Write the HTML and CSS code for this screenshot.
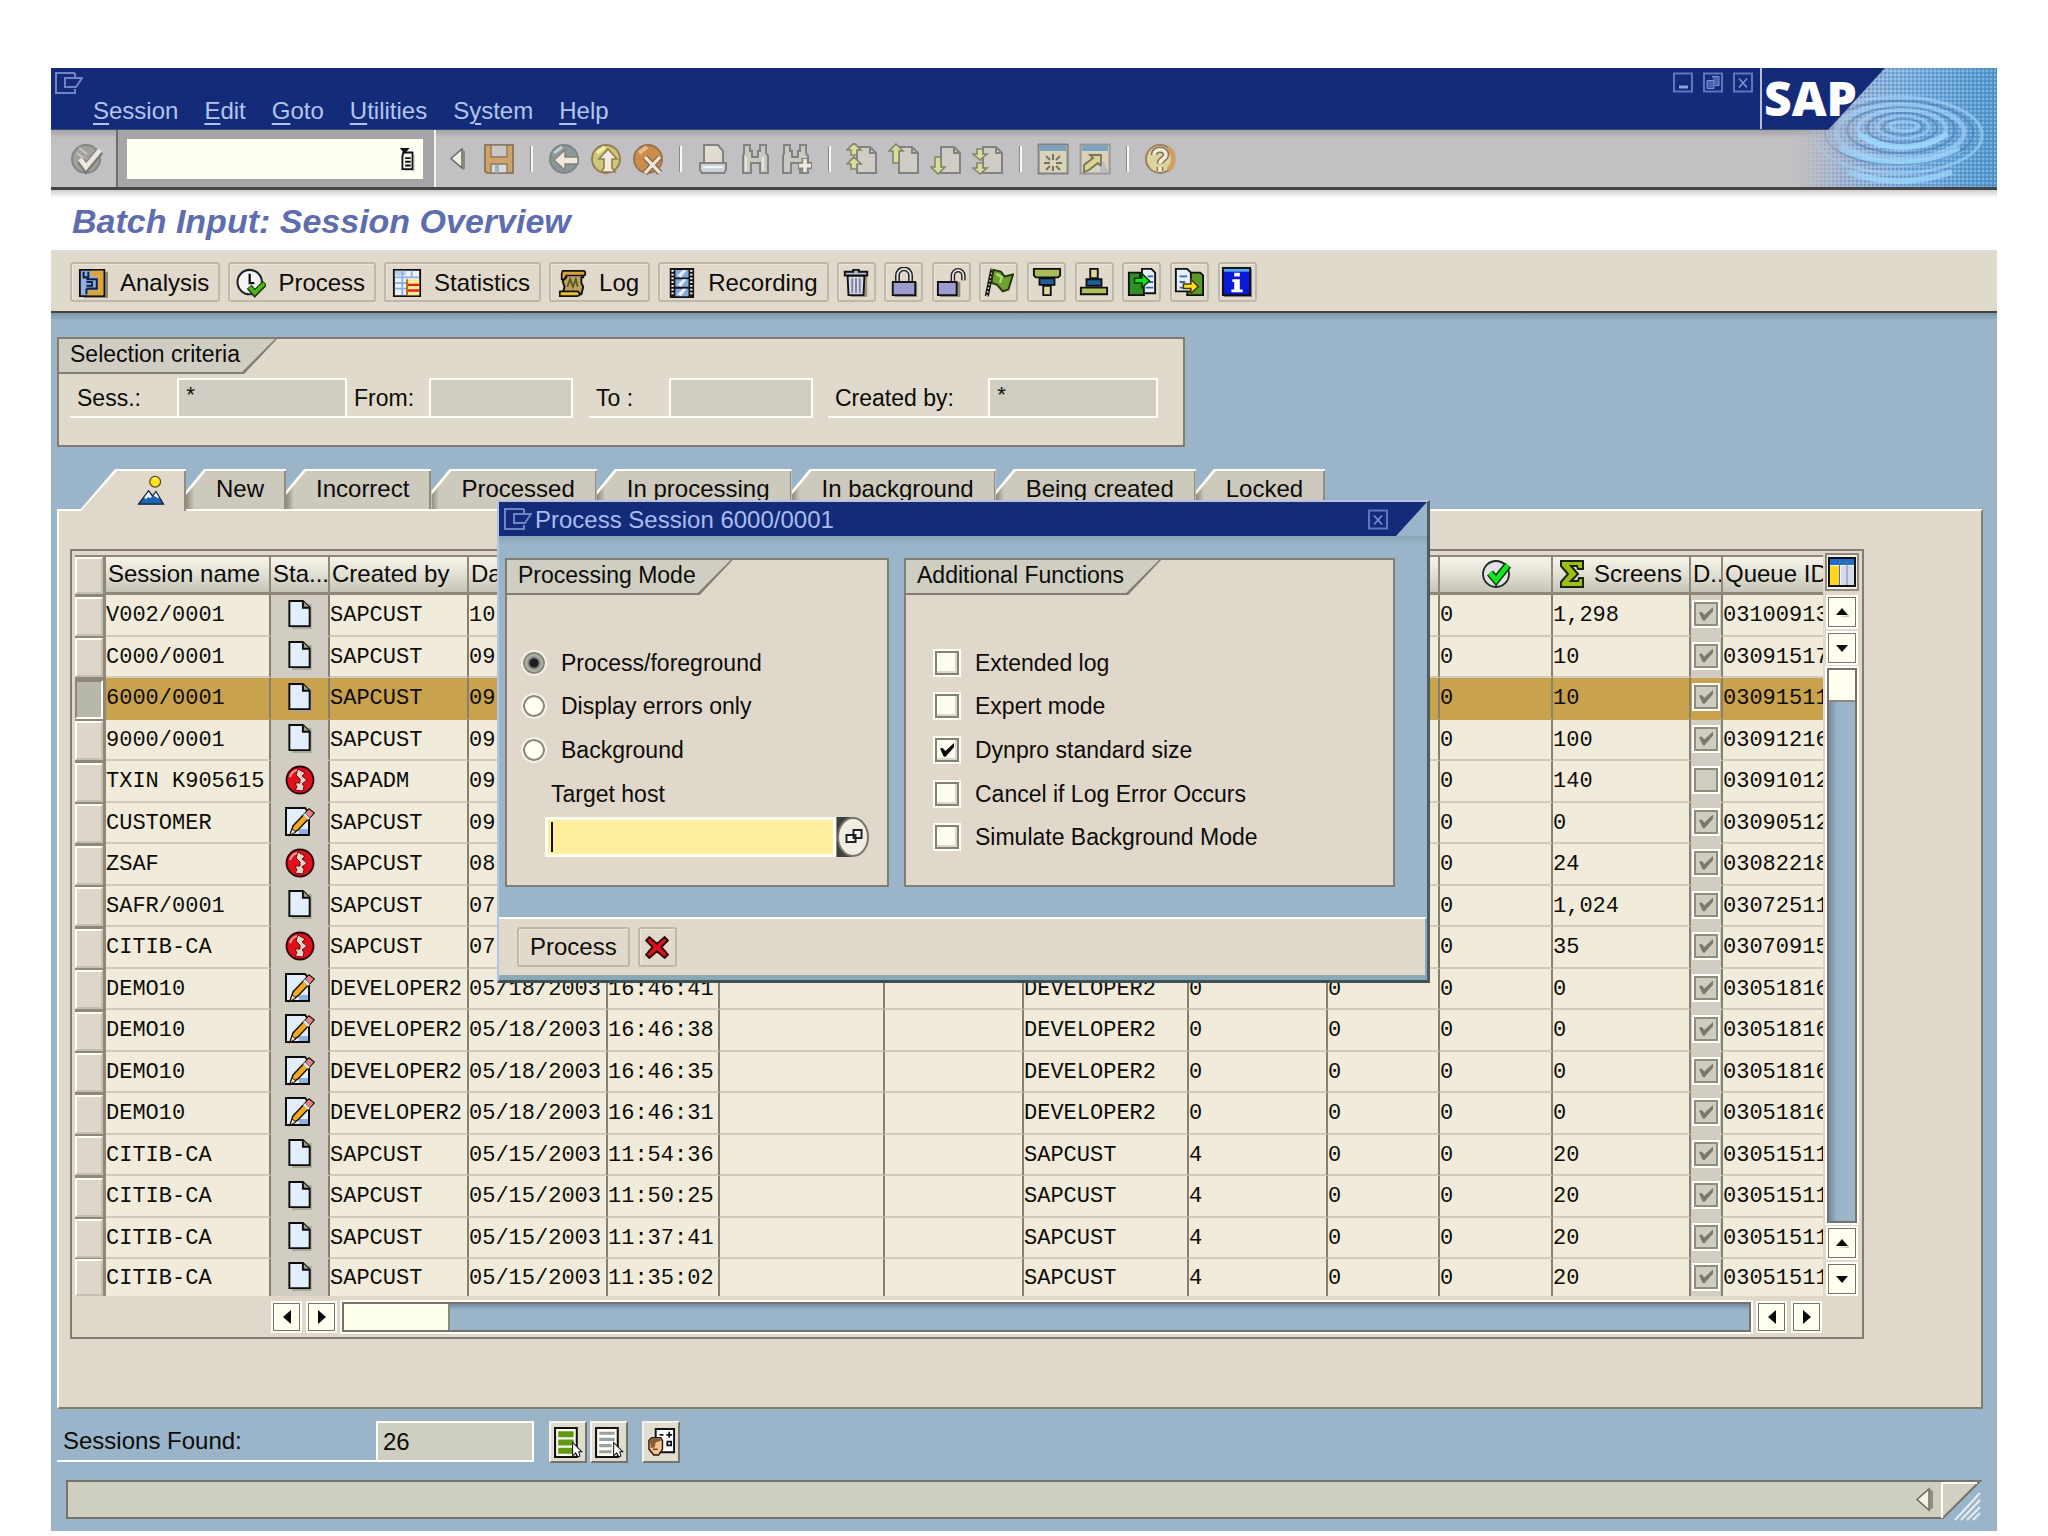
FILE: index.html
```html
<!DOCTYPE html>
<html lang="en">
<head>
<meta charset="utf-8">
<title>Batch Input: Session Overview</title>
<link rel="stylesheet" href="styles.css">
</head>
<body>
<svg class="sprite" aria-hidden="true">
  <symbol id="i-window" viewBox="0 0 28 22"><path d="M20 1H1v20h19v-4M10 6h17l-6 9H10zM20 1v5" fill="none" stroke="#7184c2" stroke-width="2"/></symbol>
  <symbol id="i-min" viewBox="0 0 20 20"><path d="M1 1h18v18H1z" fill="none" stroke="#5f76bd" stroke-width="2"/><path d="M6 13h9v3H6z" fill="#8fa4dc"/></symbol>
  <symbol id="i-restore" viewBox="0 0 20 20"><path d="M1 1h18v18H1z" fill="none" stroke="#5f76bd" stroke-width="2"/><path d="M4 8h7v8H4zM9 4h7v9h-4" fill="#4a62b0" stroke="#7f95d2"/></symbol>
  <symbol id="i-close" viewBox="0 0 20 20"><path d="M1 1h18v18H1z" fill="none" stroke="#5f76bd" stroke-width="2"/><path d="M6 6l8 9M14 6l-8 9" stroke="#7f95d2" stroke-width="1.5"/></symbol>
  <symbol id="i-enter" viewBox="0 0 16 16"><circle cx="7.5" cy="8" r="7" fill="#a3a19d" stroke="#868482"/><path d="M4 2.5l4 3M3 5l4 3" stroke="#c8c6c2"/><path d="M4.500 8.500l3 4L14.500 4" fill="none" stroke="#7d7b79" stroke-width="4"/><path d="M4.500 8l3 4 7-8.500" fill="none" stroke="#ece8de" stroke-width="2.300"/></symbol>
  <symbol id="i-list" viewBox="0 0 16 26"><path d="M4 6h10v18H3V10z" fill="#f5f5ee" stroke="#111" stroke-width="2"/><path d="M0 1h11L5.500 7z" fill="#111"/><path d="M6 12h6M6 16h6M6 20h6" stroke="#111" stroke-width="2"/><path d="M15.500 8v18H5" fill="none" stroke="#999"/></symbol>
  <symbol id="i-tri" viewBox="0 0 16 24"><path d="M14 3v20l2-1V4z" fill="#8b8984"/><path d="M13 2v19L2 11.500z" fill="#f1eee4" stroke="#6b6965" stroke-width="1.500"/></symbol>
  <symbol id="i-save" viewBox="0 0 16 16"><path d="M1 1h14v14H2l-1-1z" fill="#cfa468" stroke="#8e7a61"/><path d="M4 1h8v6H4z" fill="#c9c7c6" stroke="#8e7a61" stroke-width=".7"/><path d="M4 10.500h8V15H4z" fill="#d8dadb" stroke="#8e7a61" stroke-width=".7"/><path d="M6 11h2v4H6z" fill="#9fb3bd"/></symbol>
  <symbol id="i-back" viewBox="0 0 16 16"><circle cx="8" cy="8" r="7" fill="#8b9799" stroke="#7f8485"/><path d="M3 5l4-3" stroke="#c3cdd0" stroke-width="1.500"/><path d="M3 8.500L8.500 3.500V7H15v3.500H8.500v3z" fill="#eee7da" stroke="#857f76" stroke-width=".7"/></symbol>
  <symbol id="i-exit" viewBox="0 0 16 16"><circle cx="8" cy="8" r="7" fill="#cfc77e" stroke="#94804f"/><path d="M3.500 5l4-3" stroke="#f0eda9" stroke-width="2"/><path d="M9 3l4.500 5H11v4.500l1.500 2H5.500l1.500-2V8H4.500z" fill="#f1ebdb" stroke="#957c4b" stroke-width=".8"/></symbol>
  <symbol id="i-cancel" viewBox="0 0 16 16"><circle cx="8" cy="8" r="7" fill="#cb8d4a" stroke="#9a7550"/><path d="M3.500 5l4-3" stroke="#e9c08c" stroke-width="2"/><path d="M6.500 7l7.500 8M14 7l-7.500 8" stroke="#8d6c4e" stroke-width="3"/><path d="M6.500 7l7.500 8M14 7l-7.500 8" stroke="#f0e9da" stroke-width="1.600"/></symbol>
  <symbol id="i-print" viewBox="0 0 16 16"><path d="M3.500 1h7l2.500 3v7H3.500z" fill="#e2dcd0" stroke="#84827f"/><path d="M1.500 10h13v3.500l-1 1.500h-11l-1-1.500z" fill="#cbd3da" stroke="#84827f"/><path d="M3 12h10" stroke="#f3f3f3"/></symbol>
  <symbol id="i-find" viewBox="0 0 16 16"><path d="M2.500 1h3v3h1v3h3V4h1V1h3v4l1 1.500V15h-4v-5H6v5H2V6.500L2.500 5z" fill="#cac8c3" stroke="#84827f"/><path d="M3.500 7v7M12 7v7" stroke="#e9e6de"/></symbol>
  <symbol id="i-findnext" viewBox="0 0 16 16"><path d="M1.500 1h3v3h1v3h3V4h1V1h3v4l1 1.500V15h-4v-5H5v5H1V6.500L1.500 5z" fill="#cac8c3" stroke="#84827f"/><path d="M12 7.500v7.500M8.500 11.300h7" stroke="#84827f" stroke-width="3.600"/><path d="M12 8v6.500M9 11.300h6" stroke="#eee9dc" stroke-width="1.800"/></symbol>
  <symbol id="i-page" viewBox="0 0 16 16"><path d="M5.500 2H12l3 3v10H5.500z" fill="#cfcdc6" stroke="#84827f"/><path d="M12 2v3h3" fill="none" stroke="#84827f"/></symbol>
  <symbol id="i-up1" viewBox="0 0 16 16"><path d="M4 0l3.500 3.500H5.500V6h-3V3.500H.5zM4 7l3.500 3.500H5.500V13h-3v-2.500H.5z" fill="#d9dc9c" stroke="#82866a" stroke-width=".8"/></symbol>
  <symbol id="i-up" viewBox="0 0 16 16"><path d="M4 .5L7.500 4H5.500v6h-3V4H.5z" fill="#d9dc9c" stroke="#82866a" stroke-width=".8"/></symbol>
  <symbol id="i-down" viewBox="0 0 16 16"><path d="M4 15.500L.5 12h2V7h3v5h2z" fill="#d9dc9c" stroke="#82866a" stroke-width=".8"/></symbol>
  <symbol id="i-down2" viewBox="0 0 16 16"><path d="M4 8.500L.5 5.500h2V3h3v2.500h2zM4 15.500l-3.500-3h2V10h3v2.500h2z" fill="#d9dc9c" stroke="#82866a" stroke-width=".8"/></symbol>
  <symbol id="i-session" viewBox="0 0 16 16"><path d="M.8.800h14.500v14.500H.8z" fill="#d8d4bb" stroke="#84827f"/><path d="M1.500 1h13v3h-13z" fill="#7ea3be"/><path d="M8 5.500v3M8 11.500V14M3.500 10h3M9.500 10h3M4.500 6.500l2 2M11.500 6.500l-2 2M4.500 13.500l2-2M11.500 13.500l-2-2" stroke="#77745c"/></symbol>
  <symbol id="i-shortcut" viewBox="0 0 16 16"><path d="M.8.800h14.500v14.500H.8z" fill="#d8d4bb" stroke="#9a9894"/><path d="M1.500 1h13v3h-13z" fill="#7ea3be"/><path d="M2.500 14.500V11L7 7.500 5.500 6H11v5.500L9.500 10 5 13.500z" fill="#ddd391" stroke="#77745c" stroke-width=".9"/><path d="M12 9l3 6h-5z" fill="#bbb9c4"/></symbol>
  <symbol id="i-help" viewBox="0 0 16 16"><circle cx="8" cy="8" r="7" fill="#ded49e" stroke="#9a8363"/><path d="M12 2.500a7 7 0 0 1 0 11" fill="none" stroke="#d0a060" stroke-width="2.500"/><path d="M5 6c0-3.500 6-3.500 6 0 0 2-3 2-3 4.300M8 12v2" fill="none" stroke="#8a7558" stroke-width="3.300"/><path d="M5 6c0-3.500 6-3.500 6 0 0 2-3 2-3 4.300M8 12v2" fill="none" stroke="#f2ecde" stroke-width="1.800"/></symbol>
  <symbol id="i-analysis" viewBox="0 0 16 16"><path d="M2 2h14v14H3z" fill="#8b8676"/><path d="M1 1h13v14H1z" fill="#8fb0e0" stroke="#111"/><path d="M7 1.500h6.500v13H5v-2.500h5.500V4.500H7z" fill="#dfa437"/><path d="M3 2v3h2.500V2M4.500 6h5.500v5H4.500M4.500 11v3M4.500 7.500h3v2h-3" fill="none" stroke="#14204a" stroke-width="1.100"/></symbol>
  <symbol id="i-process" viewBox="0 0 16 16"><circle cx="7.300" cy="7.500" r="6.500" fill="#f4f6f8" stroke="#222" stroke-width="1.100"/><path d="M7.300 3V8h2.500" fill="none" stroke="#111" stroke-width="1.200"/><path d="M7 10l3 3.500L15.500 8" fill="none" stroke="#173f06" stroke-width="3.400"/><path d="M7.300 10.300l2.700 3L15 8.300" fill="none" stroke="#4fb51f" stroke-width="1.900"/></symbol>
  <symbol id="i-stats" viewBox="0 0 16 16"><path d="M1 1h14v14H1z" fill="#eef4fc" stroke="#111"/><path d="M1.500 1.500h6v2.500h-6z" fill="#b9d0f0"/><path d="M1.500 5h13M1.500 8h6M1.500 11h6M5.500 1.500v13M10.500 1.500v4" stroke="#8fb0e0"/><path d="M8 6h6.500v8.500H8z" fill="#ffe98c"/><path d="M8 9h6.500M8 12h6.500" stroke="#e2231a" stroke-width="1.300"/><path d="M8 6v8.500" stroke="#b36a10"/></symbol>
  <symbol id="i-log" viewBox="0 0 16 16"><path d="M4 3h10v2h-1v3l1 2-1 4H3l1-4-1-3 2-2z" fill="#c2a05c" stroke="#111"/><path d="M1.500 12.500h9c2 0 2 2.500 0 2.500h-9z" fill="#e8bd3c" stroke="#111" stroke-width=".9"/><path d="M3 1.500h11c1.500 0 1.500 2.500 0 2.500H5l-1 2H2.500V3z" fill="#d9a53a" stroke="#111" stroke-width=".9"/><path d="M5.500 10l1.500-4 1.500 4 1.500-4 1 4" fill="none" stroke="#4f5f2c"/></symbol>
  <symbol id="i-film" viewBox="0 0 16 16"><path d="M2 0h13v16H2z" fill="#151515"/><path d="M5 1h7v4H5zM5 6h7v4H5zM5 11h7v4H5z" fill="#86a8dc"/><path d="M6 4l3-3h2L8 5M6 9l3-3h2l-3 4M6 14l3-3h2l-3 4" fill="#e4efff"/><path d="M3.500 1v14M13.500 1v14" stroke="#fff" stroke-width="1.200" stroke-dasharray="1 1"/></symbol>
  <symbol id="i-trash" viewBox="0 0 16 16"><path d="M5 5h9v11H5z" fill="#99957f"/><path d="M3.500 4.500h9L12 15H4z" fill="#d8dbe6" stroke="#111"/><path d="M6 6v8M8 6v8M10 6v8" stroke="#7d80a0"/><path d="M2 2.500h4.500v-1h3v1H14v2H2z" fill="#b9bdcd" stroke="#111"/></symbol>
  <symbol id="i-lock" viewBox="0 0 16 16"><path d="M3 8h12v8H3z" fill="#8f8b7d"/><path d="M4.500 8V4.500a3.500 3.500 0 0 1 7 0V8" fill="none" stroke="#222" stroke-width="2.600"/><path d="M4.500 8V4.500a3.500 3.500 0 0 1 7 0V8" fill="none" stroke="#e8e8ee"/><path d="M2 8h12v7H2z" fill="#9d9cd0" stroke="#111"/></symbol>
  <symbol id="i-unlock" viewBox="0 0 16 16"><path d="M2 8h11v8H2z" fill="#8f8b7d"/><path d="M9 8V4.500a2.800 2.800 0 0 1 5.600 0V7" fill="none" stroke="#222" stroke-width="2.400"/><path d="M9 8V4.500a2.800 2.800 0 0 1 5.600 0V7" fill="none" stroke="#e8e8ee" stroke-width=".9"/><path d="M1 8h10v7H1z" fill="#9d9cd0" stroke="#111"/></symbol>
  <symbol id="i-flag" viewBox="0 0 16 16"><path d="M4.500 1L1.500 15.500" stroke="#111" stroke-width="2.200"/><path d="M4.500 1L1.500 15.500" stroke="#cfcbb8" stroke-width=".8" stroke-dasharray="1 1"/><path d="M5 1.500l4 1 2 2.500 4.500-1-2.500 8-3 1L7 9.500 4 8.500z" fill="#6ea02c" stroke="#21360b"/><path d="M6.500 3.500l3 2-1 3" fill="none" stroke="#b4d67c" stroke-width="1.200"/></symbol>
  <symbol id="i-funnel" viewBox="0 0 16 16"><path d="M1 1h14v3.500l-1 1H2l-1-1z" fill="#a9bb5c" stroke="#111"/><path d="M4 6h8v3.500H4z" fill="#1d5f9c" stroke="#111"/><path d="M6 10h4v5H6z" fill="#dcd79a" stroke="#111"/></symbol>
  <symbol id="i-funnelup" viewBox="0 0 16 16"><path d="M6 1h4v5H6z" fill="#dcd79a" stroke="#111"/><path d="M4 6.500h8V10H4z" fill="#1d5f9c" stroke="#111"/><path d="M1 11h14v3.500H1z" fill="#b3c05f" stroke="#111"/></symbol>
  <symbol id="i-import" viewBox="0 0 16 16"><path d="M8 1h5l2 2v11H8z" fill="#e6f0fc" stroke="#111"/><path d="M11 5h3M11 8h3M10 11h4" stroke="#3c62a8"/><path d="M1 3h6v3l2 4v5H1z" fill="#2f8f22" stroke="#111"/><path d="M4 6h4V3.500L12 7.500 8 11V8.500H4z" fill="#13e21b" stroke="#0a3a0a" stroke-width=".8"/></symbol>
  <symbol id="i-export" viewBox="0 0 16 16"><path d="M8 3h6l1.500 1.500V15H7z" fill="#5a9a2a" stroke="#111"/><path d="M1 1h6l2 2v10H1z" fill="#e6f0fc" stroke="#111"/><path d="M3 5h4M3 8h3M3 11h2" stroke="#3c62a8"/><path d="M5 9h4V6.500l4 4-4 3.500v-2.500H5z" fill="#ffe11e" stroke="#4b3c05" stroke-width=".8"/></symbol>
  <symbol id="i-info" viewBox="0 0 16 16"><path d="M1 1h15v15H1z" fill="#7d7a8a"/><path d="M.5.500h14.500V15H.5z" fill="#0a18d8" stroke="#101010"/><path d="M1 1h13.500v1.500H1z" fill="#57a8e8"/><path d="M6.500 3h3v2h-3zM5.500 6.500h4V12H11v1.500H5V12h1.500V8h-1z" fill="#fff"/></symbol>
  <symbol id="i-overview" viewBox="0 0 30 36"><circle cx="20" cy="8" r="6.500" fill="#ffe11c" stroke="#5a4a10" stroke-width="1.500"/><path d="M18 4h4" stroke="#fff7a8" stroke-width="2"/><path d="M0 35l12-16 5 6 4-5 9 15z" fill="#1c63b4" stroke="#10203a" stroke-width="1.500"/><path d="M7 27l5-7 4 6-2 2-2-2-3 3zM18 25l3-4 4 7-3-1z" fill="#fff"/></symbol>
  <symbol id="i-doc" viewBox="0 0 24 30"><path d="M4 4h20v26H4z" fill="#a9a598"/><path d="M1 1h14l7 7v19H1z" fill="#e3eefc" stroke="#0c0c0c" stroke-width="2"/><path d="M15 1v7h7" fill="#97a08f" stroke="#0c0c0c" stroke-width="2"/></symbol>
  <symbol id="i-error" viewBox="0 0 30 30"><circle cx="15" cy="15" r="13.500" fill="#e1101c" stroke="#2c0608" stroke-width="1.800"/><path d="M13 4l7 4-3 3 5 4-5 4 2 2-1 5-8-1 2-3-2-4 5 0 0-4-4-4z" fill="#ded6c6" stroke="#6e0a10"/><path d="M5 12q2-6 7-7" stroke="#ff9c9c" stroke-width="2" fill="none"/></symbol>
  <symbol id="i-edit" viewBox="0 0 30 30"><path d="M1 1h19l4 5v22H1z" fill="#e3eefc" stroke="#0c0c0c" stroke-width="2"/><path d="M14 22h9v5h-9z" fill="#8fb0e0"/><path d="M5 28l3-9L24 2l5 4L13 23z" fill="#f5a91c" stroke="#1c1408" stroke-width="1.500"/><path d="M20 6l5 5 4-5-5-4z" fill="#e77f86" stroke="#1c1408"/><path d="M18 8l5 5 2-2-5-5z" fill="#cfe0ee"/><path d="M5 28l2-6 4 3z" fill="#fff3c8" stroke="#1c1408"/></symbol>
  <symbol id="i-ok" viewBox="0 0 30 30"><circle cx="14" cy="15" r="13" fill="#dfe3e6" stroke="#222" stroke-width="1.800"/><path d="M8 14l6 7L26 6" fill="none" stroke="#063c06" stroke-width="8"/><path d="M8 14l6 7L26 6" fill="none" stroke="#16e420" stroke-width="5"/></symbol>
  <symbol id="i-sum" viewBox="0 0 26 28"><path d="M2 1h22v8h-5l-1-3h-6l7 8-7 7h7l1-3h4v9H2v-5l7-8-7-8z" fill="#9dc013" stroke="#1a2303" stroke-width="2"/></symbol>
  <symbol id="i-cols" viewBox="0 0 28 30"><path d="M1 1h26v28H1z" fill="#eef2fa" stroke="#111" stroke-width="2"/><path d="M2 2h24v6H2z" fill="#1f6fc4"/><path d="M2 9h9v19H2z" fill="#ffd91e"/><path d="M13 9h5v19h-5zM20 9h6v19h-6z" fill="#d5daea"/><path d="M11.500 4v24M19 4v24" stroke="#5a6c98"/></symbol>
  <symbol id="i-selall" viewBox="0 0 28 30"><path d="M1 1h21v28H1z" fill="#fffef4" stroke="#111" stroke-width="2"/><path d="M4 4h15v6H4zM4 12h15v6H4zM4 20h15v6H4z" fill="#5f9a12"/><path d="M18 15v13l3-3 2 4 2-1-1-4h3z" fill="#fff" stroke="#111"/></symbol>
  <symbol id="i-desel" viewBox="0 0 28 30"><path d="M1 1h21v28H1z" fill="#fffef4" stroke="#111" stroke-width="2"/><path d="M4 6h15M4 12h15M4 18h12M4 24h12" stroke="#9aa0a0" stroke-width="3"/><path d="M18 15v13l3-3 2 4 2-1-1-4h3z" fill="#fff" stroke="#111"/></symbol>
  <symbol id="i-person" viewBox="0 0 30 30"><path d="M9 1h19v24H9z" fill="#fff" stroke="#111" stroke-width="2"/><path d="M13 7h4M20 7h6M23 4v6M21 14h4v4h-4z" stroke="#111" stroke-width="1.800" fill="none"/><path d="M2 13l3-3h9l2 3v9l-4 6H7l-5-6z" fill="#f3c595" stroke="#2a1606" stroke-width="1.500"/><path d="M3 13l3-2h7l2 2-6 2-1 5-4 1z" fill="#8e5a30"/><path d="M6 22h5" stroke="#7a3a1c" stroke-width="1.500"/></symbol>
  <symbol id="i-x" viewBox="0 0 22 22"><path d="M4 2l7 6 7-6 3 3-6 6 6 7-3 3-7-6-7 6-3-3 6-7-6-6z" fill="#e2101c" stroke="#2c0608" stroke-width="1.800"/></symbol>
  <symbol id="i-f4" viewBox="0 0 32 40"><path d="M0 0h15v40H0z" fill="#3b413c"/><ellipse cx="16.500" cy="20" rx="15" ry="19" fill="#efede4" stroke="#77746a" stroke-width="2"/><path d="M17 13h8v8h-8zM10 18h9v7h-9z" fill="#fff" stroke="#222" stroke-width="2"/></symbol>
  <symbol id="i-au" viewBox="0 0 14 10"><path d="M4 10h10v-2z" fill="#c9c7ba"/><path d="M1 8L7 1l6 7z" fill="#0a0a0a"/></symbol>
  <symbol id="i-ad" viewBox="0 0 14 10"><path d="M1 2h12L7 9z" fill="#0a0a0a"/></symbol>
  <symbol id="i-al" viewBox="0 0 10 14"><path d="M9 0v14L1 7z" fill="#0a0a0a"/></symbol>
  <symbol id="i-ar" viewBox="0 0 10 14"><path d="M1 0v14l8-7z" fill="#0a0a0a"/></symbol>
</svg>

<div class="window">
  <header class="frame">
    <div class="caption">
      <div class="caption-row">
        <svg class="win-icon"><use href="#i-window"/></svg>
        <div class="win-buttons">
          <button aria-label="Minimize"><svg><use href="#i-min"/></svg></button>
          <button aria-label="Restore"><svg><use href="#i-restore"/></svg></button>
          <button aria-label="Close"><svg><use href="#i-close"/></svg></button>
        </div>
      </div>
      <nav class="menu">
        <button><u>S</u>ession</button>
        <button><u>E</u>dit</button>
        <button><u>G</u>oto</button>
        <button><u>U</u>tilities</button>
        <button>S<u>y</u>stem</button>
        <button><u>H</u>elp</button>
      </nav>
    </div>
    <div class="toolbar">
      <div class="enter"><button class="tb" aria-label="Enter"><svg><use href="#i-enter"/></svg></button></div>
      <div class="command">
        <input type="text" aria-label="Command">
        <button aria-label="Command history"><svg><use href="#i-list"/></svg></button>
      </div>
      <div class="tools">
        <button class="tb tri" aria-label="Hide command field"><svg><use href="#i-tri"/></svg></button>
        <button class="tb" aria-label="Save"><svg><use href="#i-save"/></svg></button>
        <span class="sep"></span>
        <button class="tb" aria-label="Back"><svg><use href="#i-back"/></svg></button>
        <button class="tb" aria-label="Exit"><svg><use href="#i-exit"/></svg></button>
        <button class="tb" aria-label="Cancel"><svg><use href="#i-cancel"/></svg></button>
        <span class="sep"></span>
        <button class="tb" aria-label="Print"><svg><use href="#i-print"/></svg></button>
        <button class="tb" aria-label="Find"><svg><use href="#i-find"/></svg></button>
        <button class="tb" aria-label="Find next"><svg><use href="#i-findnext"/></svg></button>
        <span class="sep"></span>
        <button class="tb" aria-label="First page"><svg><use href="#i-page"/><use href="#i-up1"/></svg></button>
        <button class="tb" aria-label="Previous page"><svg><use href="#i-page"/><use href="#i-up"/></svg></button>
        <button class="tb" aria-label="Next page"><svg><use href="#i-page"/><use href="#i-down"/></svg></button>
        <button class="tb" aria-label="Last page"><svg><use href="#i-page"/><use href="#i-down2"/></svg></button>
        <span class="sep"></span>
        <button class="tb" aria-label="New session"><svg><use href="#i-session"/></svg></button>
        <button class="tb" aria-label="Create shortcut"><svg><use href="#i-shortcut"/></svg></button>
        <span class="sep"></span>
        <button class="tb" aria-label="Help"><svg><use href="#i-help"/></svg></button>
      </div>
    </div>
    <svg class="brand" viewBox="0 0 237 119" role="img" aria-label="SAP">
      <defs>
        <linearGradient id="water" x1="0" x2="1"><stop offset="0" stop-color="#c0bfc2" stop-opacity="0"/><stop offset=".25" stop-color="#a6b3d0"/><stop offset=".55" stop-color="#7fb0e0"/><stop offset="1" stop-color="#5297cc"/></linearGradient>
        <linearGradient id="fade" x1="0" x2="1"><stop offset=".15" stop-color="#000"/><stop offset=".45" stop-color="#fff"/></linearGradient>
        <mask id="soft"><path d="M0 0h237v119H0z" fill="url(#fade)"/></mask>
        <pattern id="dots" width="4" height="4" patternUnits="userSpaceOnUse"><path d="M0 0h2v2H0z" fill="#3c80b8" opacity=".45"/><path d="M2 2h2v2H2z" fill="#c4e2f4" opacity=".35"/></pattern>
        <clipPath id="corner"><path d="M125 0h112v119H30V62h38z"/></clipPath>
      </defs>
      <g clip-path="url(#corner)">
        <path d="M30 0h207v119H30z" fill="url(#water)"/>
        <g mask="url(#soft)">
          <path d="M30 0h207v119H30z" fill="url(#dots)"/>
          <g fill="none" stroke="#a5d4fb" opacity=".6">
            <ellipse cx="144" cy="58" rx="14" ry="5" stroke-width="3"/>
            <ellipse cx="143" cy="59" rx="26" ry="11" stroke-width="2"/>
            <ellipse cx="142" cy="61" rx="44" ry="19" stroke-width="4"/>
            <ellipse cx="140" cy="64" rx="64" ry="27" stroke-width="5"/>
            <ellipse cx="138" cy="67" rx="84" ry="38" stroke-width="3"/>
          </g>
          <path d="M98 66q44 26 90 0M80 80q58 30 120 2M88 104q50 18 104 0" fill="none" stroke="#9fdcff" stroke-width="6" opacity=".7"/>
          <g fill="none" stroke="#4179ae" stroke-width="2" opacity=".5">
            <ellipse cx="143" cy="59" rx="20" ry="8"/>
            <ellipse cx="142" cy="60" rx="35" ry="15"/>
            <ellipse cx="141" cy="62" rx="54" ry="23"/>
            <ellipse cx="139" cy="65" rx="74" ry="32"/>
          </g>
        </g>
      </g>
      <path d="M1 0v61" stroke="#b9bfd0" stroke-width="2"/>
      <text class="logo" x="4" y="48">SAP</text>
    </svg>
  </header>

  <h1 class="title">Batch Input: Session Overview</h1>

  <div class="app-toolbar">
    <button class="btn"><svg><use href="#i-analysis"/></svg>Analysis</button>
    <button class="btn"><svg><use href="#i-process"/></svg>Process</button>
    <button class="btn"><svg><use href="#i-stats"/></svg>Statistics</button>
    <button class="btn"><svg><use href="#i-log"/></svg>Log</button>
    <button class="btn"><svg><use href="#i-film"/></svg>Recording</button>
    <div class="icon-buttons">
      <button class="btn icon" aria-label="Delete"><svg><use href="#i-trash"/></svg></button>
      <button class="btn icon" aria-label="Lock"><svg><use href="#i-lock"/></svg></button>
      <button class="btn icon" aria-label="Unlock"><svg><use href="#i-unlock"/></svg></button>
      <button class="btn icon" aria-label="Release"><svg><use href="#i-flag"/></svg></button>
      <button class="btn icon" aria-label="Sort descending"><svg><use href="#i-funnel"/></svg></button>
      <button class="btn icon" aria-label="Sort ascending"><svg><use href="#i-funnelup"/></svg></button>
      <button class="btn icon" aria-label="Import"><svg><use href="#i-import"/></svg></button>
      <button class="btn icon" aria-label="Export"><svg><use href="#i-export"/></svg></button>
      <button class="btn icon" aria-label="Information"><svg><use href="#i-info"/></svg></button>
    </div>
  </div>

  <main class="work">
    <section class="group criteria">
      <h2 class="group-title"><span>Selection criteria</span></h2>
      <div class="criteria-row">
        <label class="field f-sess"><span>Sess.:</span><input class="wide" type="text" value="*" readonly></label>
        <label class="field f-from"><span>From:</span><input type="text" readonly></label>
        <label class="field f-to"><span>To :</span><input type="text" readonly></label>
        <label class="field f-by"><span>Created by:</span><input class="wide" type="text" value="*" readonly></label>
      </div>
    </section>

    <div class="tabs" role="tablist">
      <button class="tab active" role="tab" aria-selected="true" aria-label="Overview"><svg><use href="#i-overview"/></svg></button>
      <button class="tab" role="tab">New</button>
      <button class="tab" role="tab">Incorrect</button>
      <button class="tab" role="tab">Processed</button>
      <button class="tab" role="tab">In processing</button>
      <button class="tab" role="tab">In background</button>
      <button class="tab" role="tab">Being created</button>
      <button class="tab" role="tab">Locked</button>
    </div>

    <section class="panel">
      <div class="grid-box">
        <table class="sessions">
          <colgroup><col class="c31"><col class="c165"><col class="c59"><col class="c139"><col class="c139"><col class="c112"><col class="c165"><col class="c139"><col class="c165"><col class="c139"><col class="c112"><col class="c113"><col class="c138"><col class="c32"><col class="c100"></colgroup>
          <thead>
            <tr><th class="sel"><button aria-label="Select all"></button></th><th>Session name</th><th>Sta...</th><th>Created by</th><th>Date</th><th></th><th></th><th></th><th></th><th></th><th></th><th class="mid"><svg class="s30"><use href="#i-ok"/></svg></th><th><span class="sum"><svg class="s26"><use href="#i-sum"/></svg>Screens</span></th><th>D..</th><th>Queue ID</th></tr>
          </thead>
          <tbody>
            <tr><td class="sel"><button aria-label="Select row"></button></td><td>V002/0001</td><td class="st"><svg class="doc"><use href="#i-doc"/></svg></td><td>SAPCUST</td><td>10</td><td></td><td></td><td></td><td></td><td></td><td></td><td>0</td><td>1,298</td><td class="st"><input type="checkbox" aria-label="Dynpro" checked disabled></td><td>03100913</td></tr>
            <tr><td class="sel"><button aria-label="Select row"></button></td><td>C000/0001</td><td class="st"><svg class="doc"><use href="#i-doc"/></svg></td><td>SAPCUST</td><td>09</td><td></td><td></td><td></td><td></td><td></td><td></td><td>0</td><td>10</td><td class="st"><input type="checkbox" aria-label="Dynpro" checked disabled></td><td>03091517</td></tr>
            <tr class="current"><td class="sel"><button aria-label="Select row"></button></td><td>6000/0001</td><td class="st"><svg class="doc"><use href="#i-doc"/></svg></td><td>SAPCUST</td><td>09</td><td></td><td></td><td></td><td></td><td></td><td></td><td>0</td><td>10</td><td class="st"><input type="checkbox" aria-label="Dynpro" checked disabled></td><td>03091511</td></tr>
            <tr><td class="sel"><button aria-label="Select row"></button></td><td>9000/0001</td><td class="st"><svg class="doc"><use href="#i-doc"/></svg></td><td>SAPCUST</td><td>09</td><td></td><td></td><td></td><td></td><td></td><td></td><td>0</td><td>100</td><td class="st"><input type="checkbox" aria-label="Dynpro" checked disabled></td><td>03091216</td></tr>
            <tr><td class="sel"><button aria-label="Select row"></button></td><td>TXIN K905615</td><td class="st"><svg class="s30"><use href="#i-error"/></svg></td><td>SAPADM</td><td>09</td><td></td><td></td><td></td><td></td><td></td><td></td><td>0</td><td>140</td><td class="st"><input type="checkbox" aria-label="Dynpro" disabled></td><td>03091012</td></tr>
            <tr><td class="sel"><button aria-label="Select row"></button></td><td>CUSTOMER</td><td class="st"><svg class="s30"><use href="#i-edit"/></svg></td><td>SAPCUST</td><td>09</td><td></td><td></td><td></td><td></td><td></td><td></td><td>0</td><td>0</td><td class="st"><input type="checkbox" aria-label="Dynpro" checked disabled></td><td>03090512</td></tr>
            <tr><td class="sel"><button aria-label="Select row"></button></td><td>ZSAF</td><td class="st"><svg class="s30"><use href="#i-error"/></svg></td><td>SAPCUST</td><td>08</td><td></td><td></td><td></td><td></td><td></td><td></td><td>0</td><td>24</td><td class="st"><input type="checkbox" aria-label="Dynpro" checked disabled></td><td>03082218</td></tr>
            <tr><td class="sel"><button aria-label="Select row"></button></td><td>SAFR/0001</td><td class="st"><svg class="doc"><use href="#i-doc"/></svg></td><td>SAPCUST</td><td>07</td><td></td><td></td><td></td><td></td><td></td><td></td><td>0</td><td>1,024</td><td class="st"><input type="checkbox" aria-label="Dynpro" checked disabled></td><td>03072511</td></tr>
            <tr><td class="sel"><button aria-label="Select row"></button></td><td>CITIB-CA</td><td class="st"><svg class="s30"><use href="#i-error"/></svg></td><td>SAPCUST</td><td>07</td><td></td><td></td><td></td><td></td><td></td><td></td><td>0</td><td>35</td><td class="st"><input type="checkbox" aria-label="Dynpro" checked disabled></td><td>03070915</td></tr>
            <tr><td class="sel"><button aria-label="Select row"></button></td><td>DEMO10</td><td class="st"><svg class="s30"><use href="#i-edit"/></svg></td><td>DEVELOPER2</td><td>05/18/2003</td><td>16:46:41</td><td></td><td></td><td>DEVELOPER2</td><td>0</td><td>0</td><td>0</td><td>0</td><td class="st"><input type="checkbox" aria-label="Dynpro" checked disabled></td><td>03051816</td></tr>
            <tr><td class="sel"><button aria-label="Select row"></button></td><td>DEMO10</td><td class="st"><svg class="s30"><use href="#i-edit"/></svg></td><td>DEVELOPER2</td><td>05/18/2003</td><td>16:46:38</td><td></td><td></td><td>DEVELOPER2</td><td>0</td><td>0</td><td>0</td><td>0</td><td class="st"><input type="checkbox" aria-label="Dynpro" checked disabled></td><td>03051816</td></tr>
            <tr><td class="sel"><button aria-label="Select row"></button></td><td>DEMO10</td><td class="st"><svg class="s30"><use href="#i-edit"/></svg></td><td>DEVELOPER2</td><td>05/18/2003</td><td>16:46:35</td><td></td><td></td><td>DEVELOPER2</td><td>0</td><td>0</td><td>0</td><td>0</td><td class="st"><input type="checkbox" aria-label="Dynpro" checked disabled></td><td>03051816</td></tr>
            <tr><td class="sel"><button aria-label="Select row"></button></td><td>DEMO10</td><td class="st"><svg class="s30"><use href="#i-edit"/></svg></td><td>DEVELOPER2</td><td>05/18/2003</td><td>16:46:31</td><td></td><td></td><td>DEVELOPER2</td><td>0</td><td>0</td><td>0</td><td>0</td><td class="st"><input type="checkbox" aria-label="Dynpro" checked disabled></td><td>03051816</td></tr>
            <tr><td class="sel"><button aria-label="Select row"></button></td><td>CITIB-CA</td><td class="st"><svg class="doc"><use href="#i-doc"/></svg></td><td>SAPCUST</td><td>05/15/2003</td><td>11:54:36</td><td></td><td></td><td>SAPCUST</td><td>4</td><td>0</td><td>0</td><td>20</td><td class="st"><input type="checkbox" aria-label="Dynpro" checked disabled></td><td>03051511</td></tr>
            <tr><td class="sel"><button aria-label="Select row"></button></td><td>CITIB-CA</td><td class="st"><svg class="doc"><use href="#i-doc"/></svg></td><td>SAPCUST</td><td>05/15/2003</td><td>11:50:25</td><td></td><td></td><td>SAPCUST</td><td>4</td><td>0</td><td>0</td><td>20</td><td class="st"><input type="checkbox" aria-label="Dynpro" checked disabled></td><td>03051511</td></tr>
            <tr><td class="sel"><button aria-label="Select row"></button></td><td>CITIB-CA</td><td class="st"><svg class="doc"><use href="#i-doc"/></svg></td><td>SAPCUST</td><td>05/15/2003</td><td>11:37:41</td><td></td><td></td><td>SAPCUST</td><td>4</td><td>0</td><td>0</td><td>20</td><td class="st"><input type="checkbox" aria-label="Dynpro" checked disabled></td><td>03051511</td></tr>
            <tr><td class="sel"><button aria-label="Select row"></button></td><td>CITIB-CA</td><td class="st"><svg class="doc"><use href="#i-doc"/></svg></td><td>SAPCUST</td><td>05/15/2003</td><td>11:35:02</td><td></td><td></td><td>SAPCUST</td><td>4</td><td>0</td><td>0</td><td>20</td><td class="st"><input type="checkbox" aria-label="Dynpro" checked disabled></td><td>03051511</td></tr>
          </tbody>
        </table>
        <div class="vscroll">
          <button class="config" aria-label="Table settings"><svg><use href="#i-cols"/></svg></button>
          <button class="arrow" aria-label="First row"><svg class="v"><use href="#i-au"/></svg></button>
          <button class="arrow" aria-label="Next row"><svg class="v"><use href="#i-ad"/></svg></button>
          <div class="track"><div class="thumb"></div></div>
          <button class="arrow" aria-label="Previous row"><svg class="v"><use href="#i-au"/></svg></button>
          <button class="arrow" aria-label="Last row"><svg class="v"><use href="#i-ad"/></svg></button>
        </div>
        <div class="hscroll">
          <button class="arrow" aria-label="First column"><svg class="h"><use href="#i-al"/></svg></button>
          <button class="arrow" aria-label="Next column"><svg class="h"><use href="#i-ar"/></svg></button>
          <div class="track"><div class="thumb"></div></div>
          <button class="arrow" aria-label="Previous column"><svg class="h"><use href="#i-al"/></svg></button>
          <button class="arrow" aria-label="Last column"><svg class="h"><use href="#i-ar"/></svg></button>
        </div>
      </div>
    </section>

    <div class="found">
      <label class="field"><span>Sessions Found:</span><input type="text" value="26" readonly></label>
      <div class="found-buttons">
        <button class="raised" aria-label="Select all"><svg><use href="#i-selall"/></svg></button>
        <button class="raised" aria-label="Deselect all"><svg><use href="#i-desel"/></svg></button>
        <button class="raised apart" aria-label="User settings"><svg><use href="#i-person"/></svg></button>
      </div>
    </div>

    <footer class="status">
      <div class="message"></div>
      <svg class="status-end" viewBox="0 0 74 41" aria-hidden="true">
        <path d="M0 0h72L35 39H0z" fill="#cfcfc1"/>
        <path d="M34 2h36L36 38h-2z" fill="#d3cfc2"/>
        <path d="M0 1h72L35 38H0" fill="none" stroke="#747468" stroke-width="2"/>
        <path d="M34 38V3h35" fill="none" stroke="#fffef4" stroke-width="2"/>
        <path d="M22 9v21l3-2V11z" fill="#8f8d80"/>
        <path d="M21 9v21L9 19.500z" fill="#f4f2e8" stroke="#6d6b60" stroke-width="1.500"/>
        <path d="M47 40l25-27M53 40l19-20M59 40l13-13M65 40l7-7" stroke="#e6eef4" stroke-width="2"/>
      </svg>
    </footer>
  </main>

  <section class="dialog" role="dialog" aria-labelledby="dlg-title">
    <header class="dlg-head">
      <svg class="win-icon"><use href="#i-window"/></svg>
      <h2 id="dlg-title">Process Session 6000/0001</h2>
      <button aria-label="Close dialog"><svg><use href="#i-close"/></svg></button>
    </header>
    <div class="dlg-body">
      <section class="group mode">
        <h3 class="group-title"><span>Processing Mode</span></h3>
        <div class="options">
          <label class="opt"><input type="radio" name="mode" checked>Process/foreground</label>
          <label class="opt"><input type="radio" name="mode">Display errors only</label>
          <label class="opt"><input type="radio" name="mode">Background</label>
          <label class="host-label" for="host">Target host</label>
          <div class="host"><span class="caret"></span><input id="host" type="text"><button aria-label="Value help"><svg><use href="#i-f4"/></svg></button></div>
        </div>
      </section>
      <section class="group extra">
        <h3 class="group-title"><span>Additional Functions</span></h3>
        <div class="options">
          <label class="opt"><input type="checkbox">Extended log</label>
          <label class="opt"><input type="checkbox">Expert mode</label>
          <label class="opt"><input type="checkbox" checked>Dynpro standard size</label>
          <label class="opt"><input type="checkbox">Cancel if Log Error Occurs</label>
          <label class="opt"><input type="checkbox">Simulate Background Mode</label>
        </div>
      </section>
    </div>
    <footer class="dlg-foot">
      <button class="btn">Process</button>
      <button class="btn icon" aria-label="Cancel"><svg class="x"><use href="#i-x"/></svg></button>
    </footer>
  </section>
</div>
</body>
</html>
```

FILE: styles.css
```css
:root {
  --navy: #142b7a;
  --blue: #9ab5ca;
  --beige: #dfdacb;
  --line: #827d70;
  --grey: #d1cdc2;
  --cell: #f0ebda;
  --white: #fffef6;
}

* { box-sizing: border-box; }

body {
  margin: 0;
  background: #fff;
  color: #0c0b08;
  font-family: "Liberation Sans", Arial, sans-serif;
  font-size: 24px;
  line-height: 28px;
}

button, input {
  margin: 0;
  padding: 0;
  border: 0;
  border-radius: 0;
  background: none;
  color: inherit;
  font: inherit;
}

button { display: flex; align-items: center; justify-content: center; }
h1, h2, h3 { margin: 0; font-size: 24px; font-weight: 400; }
svg { display: block; flex: none; }
.sprite { position: absolute; width: 0; height: 0; }

.window {
  position: relative;
  margin: 68px 51px 0;
  background: var(--blue);
}

/* Title and menu bar */
.frame { position: relative; }
.caption { height: 62px; background: var(--navy); border-bottom: 1px solid #3d4a75; }
.caption-row { display: flex; justify-content: space-between; align-items: center; height: 29px; padding: 0 244px 0 4px; }
.win-icon { width: 28px; height: 22px; }
.win-buttons { display: flex; gap: 10px; }
.win-buttons svg, .dlg-head button svg { width: 20px; height: 21px; }
.menu { display: flex; gap: 26px; padding-left: 42px; color: #b3c5ef; }
.menu u { text-underline-offset: 4px; text-decoration-thickness: 2px; }

.toolbar {
  display: flex;
  height: 60px;
  background: linear-gradient(#a3a2a5, #c1c0c2 8px);
  border-bottom: 3px solid #454344;
}
.tb { width: 32px; height: 32px; }
.tb svg { width: 32px; height: 32px; }
.tb.tri svg { width: 16px; height: 24px; }
.enter { display: flex; align-items: center; width: 67px; padding-left: 20px; border-right: 2px solid #6e6c6e; }
.command { display: flex; width: 318px; padding: 9px 11px 8px 9px; background: #a6a5a7; border-right: 2px solid #f2f1f1; }
.command input { flex: 1; min-width: 0; background: #fffff2; }
.command button { width: 32px; background: #fffff2; }
.command svg { width: 16px; height: 24px; }
.tools { display: flex; align-items: center; gap: 10px; padding-left: 5px; }
.sep { width: 3px; height: 26px; margin: 0 5px; border-left: 1px solid #8b898b; background: #f8f8f8; }
.brand { position: absolute; top: 0; right: 0; width: 237px; height: 119px; }
.logo { fill: #fff; font: 800 48px "Open Sans", sans-serif; }

.title {
  height: 62px;
  padding: 10px 21px 0;
  background: linear-gradient(#cfcccc, #fff 8px);
  border-bottom: 2px solid #dddcd8;
  color: #5d6dae;
  font: italic 700 34px/42px "Liberation Sans", Arial, sans-serif;
}

/* Application toolbar */
.app-toolbar {
  display: flex;
  align-items: center;
  gap: 8px;
  height: 61px;
  padding: 0 19px;
  background: var(--beige);
  border-bottom: 2px solid #44453f;
}
.btn {
  height: 40px;
  padding: 2px 9px 0 6px;
  border: 2px solid #bdb8a7;
  border-radius: 3px;
  background: #e1dacc;
  box-shadow: inset 1px 1px #ebe6da;
}
.btn svg { width: 30px; height: 30px; margin-right: 12px; }
.btn.icon { width: 39px; padding: 0; }
.btn.icon svg { margin: 0; }
.icon-buttons { display: flex; justify-content: space-between; width: 420px; }

/* Work area */
.work { padding: 24px 14px 12px 6px; background: linear-gradient(#7f98a6, var(--blue) 8px); }
.group { border: 2px solid var(--line); background: var(--beige); font-size: 23px; }
.group-title {
  position: relative;
  isolation: isolate;
  width: fit-content;
  height: 35px;
  padding: 1px 37px 0 11px;
  background: var(--line);
  font-size: 23px;
  clip-path: polygon(0 0, 100% 0, calc(100% - 33px) 100%, 0 100%);
}
.group-title::before {
  content: "";
  position: absolute;
  inset: 0 2px 2px 0;
  z-index: -1;
  background: #d0cec2;
  clip-path: polygon(0 0, 100% 0, calc(100% - 33px) 100%, 0 100%);
}
.criteria { width: 1128px; height: 110px; }
.criteria-row { display: flex; padding: 4px 0 0 11px; }
.field { display: flex; height: 40px; }
.field span { padding: 6px 7px 0; border-bottom: 2px solid var(--white); white-space: nowrap; }
.field input { width: 144px; padding: 0 5px; border: 2px solid var(--white); background: var(--grey); font-family: "Liberation Mono", monospace; font-size: 22px; }
.field input.wide { width: 170px; }
.f-sess span { width: 107px; }
.f-from span { width: 82px; }
.f-to { margin-left: 16px; }
.f-to span { width: 80px; }
.f-by { margin-left: 15px; }
.f-by span { width: 160px; }

/* Tab strip */
.tabs { display: flex; height: 42px; margin: 22px 0 -2px 22px; }
.tab {
  position: relative;
  isolation: isolate;
  height: 40px;
  padding: 0 22px 0 30px;
  background: var(--white);
  white-space: nowrap;
  clip-path: polygon(0 22px, 18px 0, 100% 0, 100% 100%, 0 100%);
}
.tab::before {
  content: "";
  position: absolute;
  inset: 2px 0 0 0;
  z-index: -1;
  border-right: 2px solid #918c7e;
  background: linear-gradient(90deg, #8c8879, #cdc9bd 8px);
  clip-path: polygon(0 24px, 20px 0, 100% 0, 100% 100%, 0 100%);
}
.tab.active {
  z-index: 1;
  width: 107px;
  height: 42px;
  padding: 0 0 0 37px;
  clip-path: polygon(0 100%, 36px 0, 100% 0, 100% 100%);
}
.tab.active::before { background: #e0d9cb; clip-path: polygon(2px 100%, 38px 0, 100% 0, 100% 100%); }
.tab svg { width: 30px; height: 30px; }

.panel {
  padding: 38px 0 68px 11px;
  border: 2px solid var(--line);
  border-top-color: var(--white);
  border-left-color: var(--white);
  background: #e0d9cb;
}
.grid-box {
  display: grid;
  grid-template-columns: auto 34px;
  column-gap: 2px;
  width: fit-content;
  padding: 4px 3px 5px 3px;
  border: 2px solid var(--line);
}

/* Session table */
.sessions { width: 1748px; table-layout: fixed; border-spacing: 0; font-family: "Liberation Mono", monospace; font-size: 22px; }
.c31 { width: 31px; }
.c32 { width: 32px; }
.c59 { width: 59px; }
.c100 { width: 100px; }
.c112 { width: 112px; }
.c113 { width: 113px; }
.c138 { width: 138px; }
.c139 { width: 139px; }
.c165 { width: 165px; }
.sessions th {
  height: 40px;
  padding: 0 0 2px 2px;
  overflow: hidden;
  border-top: 2px solid #8d887a;
  border-right: 2px solid #8d887a;
  border-bottom: 3px solid #8d887a;
  background: linear-gradient(#f7f4e9, #e4e1d6 45%, #c6c3b9);
  font: 400 24px/28px "Liberation Sans", Arial, sans-serif;
  text-align: left;
  white-space: nowrap;
}
.sessions td {
  height: 42px;
  padding: 2px 0 0;
  overflow: hidden;
  border-right: 2px solid #85806f;
  border-bottom: 2px solid #cfcaba;
  background: var(--cell);
  line-height: 28px;
  white-space: nowrap;
}
.sessions tr:nth-child(even) td { height: 41px; }
.sessions tr:last-child td { height: 37px; border-bottom: 0; }
.sessions th:last-child, .sessions td:last-child { border-right: 0; }
.sessions .st { padding: 0 0 2px; border-bottom-color: var(--grey); background: var(--grey); }
.sessions .current td { border-bottom-color: #c9a24d; background: #c9a24d; }
.sessions .sel, .sessions .current .sel { border: 0; background: #8d887a; padding: 0; }
.sel button {
  width: 28px;
  height: 39px;
  border: 2px solid var(--white);
  border-right-color: #c3beb0;
  border-bottom-color: #c3beb0;
  background: #dcd7ca;
}
.sessions tr:last-child .sel button { height: 37px; }
.sessions th.sel button { height: 37px; }
.sessions .current .sel button { background: #b7b7aa; border-color: #8d887a var(--white) var(--white) #8d887a; }
.sessions svg { margin: 0 auto; }
.doc { width: 24px; height: 29px; }
.s30 { width: 30px; height: 30px; }
.sum { display: flex; align-items: center; gap: 9px; padding-left: 4px; }
.sum svg { width: 26px; height: 28px; margin: 0; }

input[type="checkbox"] {
  display: block;
  flex: none;
  appearance: none;
  width: 28px;
  height: 28px;
  border: 2px solid var(--white);
  background: #fdfcf0;
  box-shadow: inset 0 0 0 2px #848074, inset -4px -4px #dcd9cc;
}
input[type="checkbox"]:checked::before {
  content: "";
  display: block;
  width: 14px;
  height: 14px;
  margin: 5px;
  background: #0a0a0a;
  clip-path: polygon(0 40%, 20% 35%, 38% 58%, 100% 0, 100% 30%, 38% 100%, 25% 95%);
}
.sessions input[type="checkbox"] { margin: 0 auto; background: #cfccc0; box-shadow: inset 0 0 0 2px #8f8c80; }
.sessions input[type="checkbox"]:checked::before { background: #7b786c; }

/* Scroll bars */
.vscroll { display: flex; flex-direction: column; align-items: center; gap: 4px; padding-bottom: 1px; }
.config { width: 34px; height: 38px; margin: -2px 0 1px; border: 2px solid #8d887a; background: #f3f0e6; }
.config svg { width: 28px; height: 30px; }
.arrow { width: 32px; height: 32px; border: 2px solid #77736a; outline: 2px solid #fffefa; outline-offset: -1px; background: #fffff0; }
.vscroll .arrow { width: 30px; }
.v { width: 14px; height: 10px; }
.h { width: 10px; height: 14px; }
.track { flex: 1; border: 2px solid #77736a; outline: 2px solid #fffefa; background: linear-gradient(90deg, #6f8d9f, var(--blue) 8px); }
.vscroll .track { width: 30px; }
.vscroll .thumb { height: 32px; border-bottom: 2px solid #8d887a; background: #fffff0; }
.hscroll { display: flex; gap: 6px; grid-column: 1; margin: 6px 2px 0 197px; }
.hscroll .arrow { width: 29px; height: 30px; }
.hscroll .track { background: linear-gradient(#6f8d9f, var(--blue) 6px); }
.hscroll .thumb { width: 106px; height: 26px; border-right: 2px solid #8d887a; background: #fffff0; }

/* Result line and status bar */
.found { display: flex; gap: 15px; margin-top: 12px; }
.found .field { height: 41px; }
.found .field span { width: 319px; padding-left: 6px; }
.found .field input { width: 158px; font: inherit; background: #cfcfc1; }
.found-buttons { display: flex; gap: 3px; }
.raised { width: 38px; height: 42px; border: 2px solid #77736a; border-top-color: #f4f2ea; border-left-color: #f4f2ea; background: #e0dcd0; }
.raised svg { width: 29px; height: 31px; }
.apart { margin-left: 11px; }
.status { display: flex; height: 39px; margin: 17px 1px 0 9px; }
.message { flex: 1; border: 2px solid #747468; border-right: 0; background: #cfcfc1; }
.status-end { width: 74px; height: 41px; }

/* Dialog */
.dialog {
  position: absolute;
  top: 432px;
  left: 446px;
  width: 933px;
  border: 2px solid #b6c4dd;
  border-right: 3px solid #4b5c64;
  border-bottom: 3px solid #3f5157;
  background: var(--blue);
}
.dlg-head {
  display: flex;
  align-items: center;
  height: 34px;
  padding: 0 39px 0 5px;
  background: var(--navy);
  color: #a9bdf0;
  clip-path: polygon(0 0, 100% 0, calc(100% - 31px) 100%, 0 100%);
}
.dlg-head h2 { flex: 1; padding: 2px 0 0 3px; }
.dlg-body { display: grid; grid-template-columns: 384px 491px; gap: 15px; padding: 22px 6px 30px; background: linear-gradient(#8aa3b5, var(--blue) 8px); }
.dlg-body .group { height: 329px; background: #e0d9cb; }
.options { display: grid; grid-template-rows: repeat(5, 1fr); align-items: center; height: 218px; margin-top: 46px; padding: 0 20px 0 14px; }
.extra .options { padding-left: 27px; }
.opt { display: flex; align-items: center; gap: 14px; }
input[type="radio"] {
  flex: none;
  appearance: none;
  width: 26px;
  height: 26px;
  border: 2px solid #f3f1e6;
  border-radius: 50%;
  background: #fffff2;
  box-shadow: inset 0 0 0 2px #88857a;
}
input[type="radio"]:checked { background: radial-gradient(#1b1f22 0 4px, #6c6e6a 5px, #a9a99f 7px, #c9c8bc 11px); }
.host-label { padding-left: 30px; }
.host { display: flex; padding-left: 24px; position: relative; }
.host input { width: 291px; height: 40px; border: 3px solid #fffdf0; background: #feef9f; }
.host svg { width: 33px; height: 40px; }
.caret { position: absolute; left: 30px; top: 5px; width: 2px; height: 30px; background: #111; }
.dlg-foot { display: flex; gap: 8px; height: 63px; padding: 8px 18px; border-top: 2px solid var(--white); border-bottom: 5px solid #8ba9b5; border-right: 2px solid #8ba9b5; background: var(--beige); }
.dlg-foot .btn { padding: 0 11px; font-size: 24px; }
.dlg-foot .btn.icon { padding: 0; }
.dlg-foot .x { width: 24px; height: 24px; }
```
